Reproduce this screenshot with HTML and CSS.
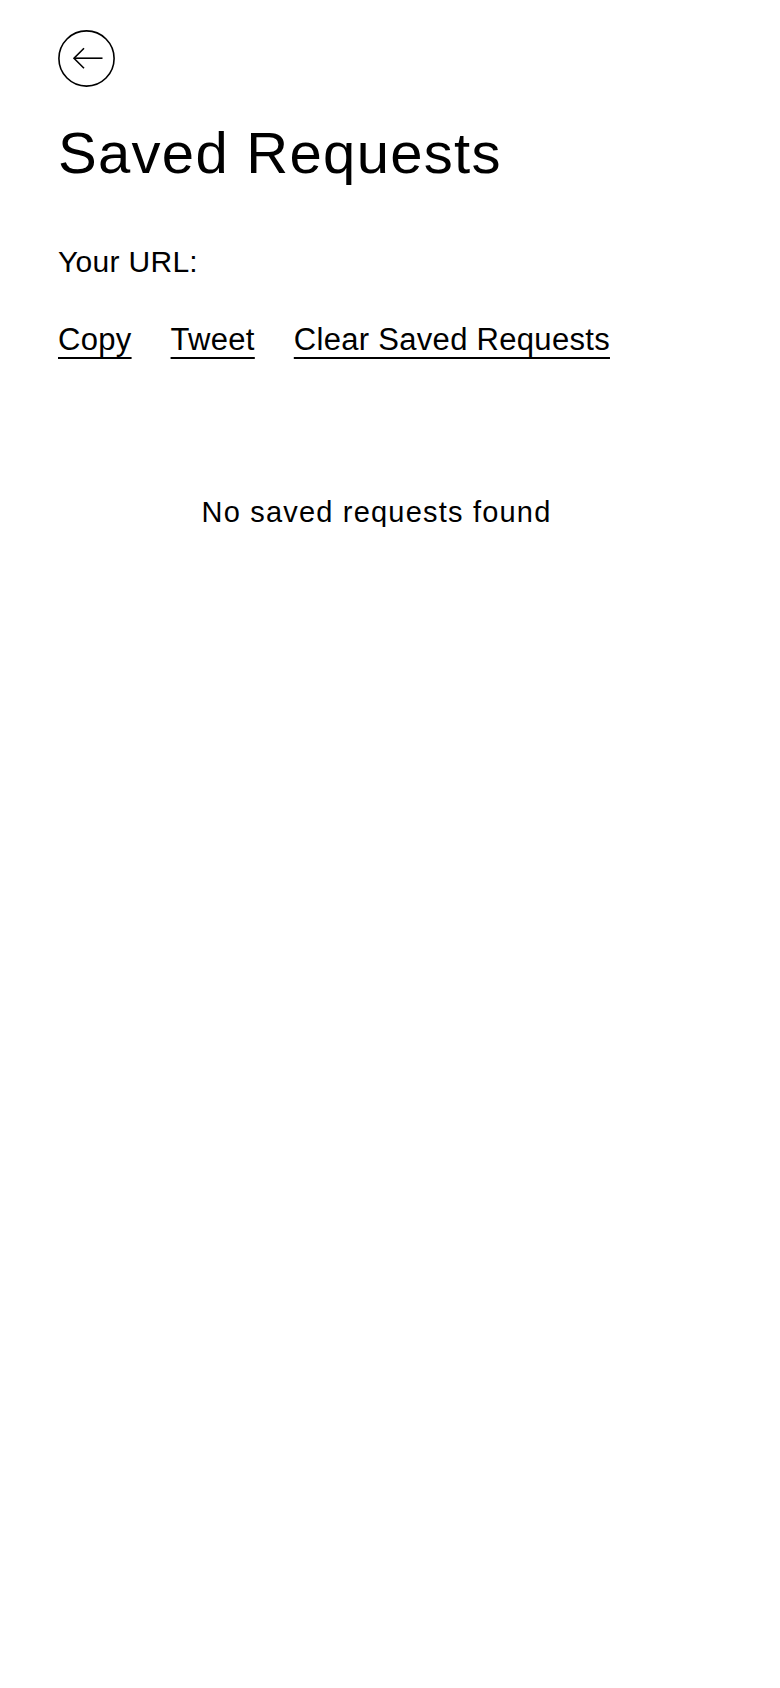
FILE: index.html
```html
<!DOCTYPE html>
<html lang="en">
<head>
<meta charset="utf-8">
<title>Saved Requests</title>
<link rel="stylesheet" href="styles.css">
</head>
<body>
<main class="page">
  <a class="back" href="#" aria-label="Back">
    <svg viewBox="0 0 57 57" width="57" height="57" fill="none" stroke="#000" stroke-width="1.6">
      <circle cx="28.5" cy="28.5" r="27.6"/>
      <path d="M16 28.2 H44.5" />
      <path d="M26 18.2 L16 28.2 L26 38.2" stroke-linejoin="miter"/>
    </svg>
  </a>
  <h1 class="title">Saved Requests</h1>
  <p class="url">Your URL:</p>
  <nav class="actions">
    <a class="action" href="#">Copy</a>
    <a class="action" href="#">Tweet</a>
    <a class="action" href="#">Clear Saved Requests</a>
  </nav>
  <p class="empty">No saved requests found</p>
</main>
</body>
</html>
```

FILE: styles.css
```css
html, body {
  margin: 0;
  padding: 0;
  background: #fff;
  color: #000;
}

body {
  font-family: "Liberation Sans", Arial, sans-serif;
}

.page {
  padding: 30px 85px 0 58px;
  display: flex;
  flex-direction: column;
  align-items: flex-start;
}

.back {
  display: block;
  width: 57px;
  height: 57px;
}

.back svg {
  display: block;
}

.title {
  margin: 37px 0 0;
  font-size: 58px;
  line-height: 1;
  font-weight: 400;
  letter-spacing: 1.3px;
}

.url {
  margin: 65px 0 0;
  font-size: 30px;
  line-height: 1;
  letter-spacing: 0.3px;
}

.actions {
  margin-top: 47px;
  display: flex;
  gap: 39px;
}

.action {
  font-size: 31px;
  line-height: 1;
  color: #000;
  letter-spacing: 0.3px;
  text-decoration: underline;
  text-decoration-thickness: 2px;
  text-underline-offset: 7px;
  text-decoration-skip-ink: none;
}

.empty {
  align-self: stretch;
  margin: 143px 0 0;
  font-size: 29px;
  line-height: 1;
  letter-spacing: 1.2px;
  text-align: center;
}
```
